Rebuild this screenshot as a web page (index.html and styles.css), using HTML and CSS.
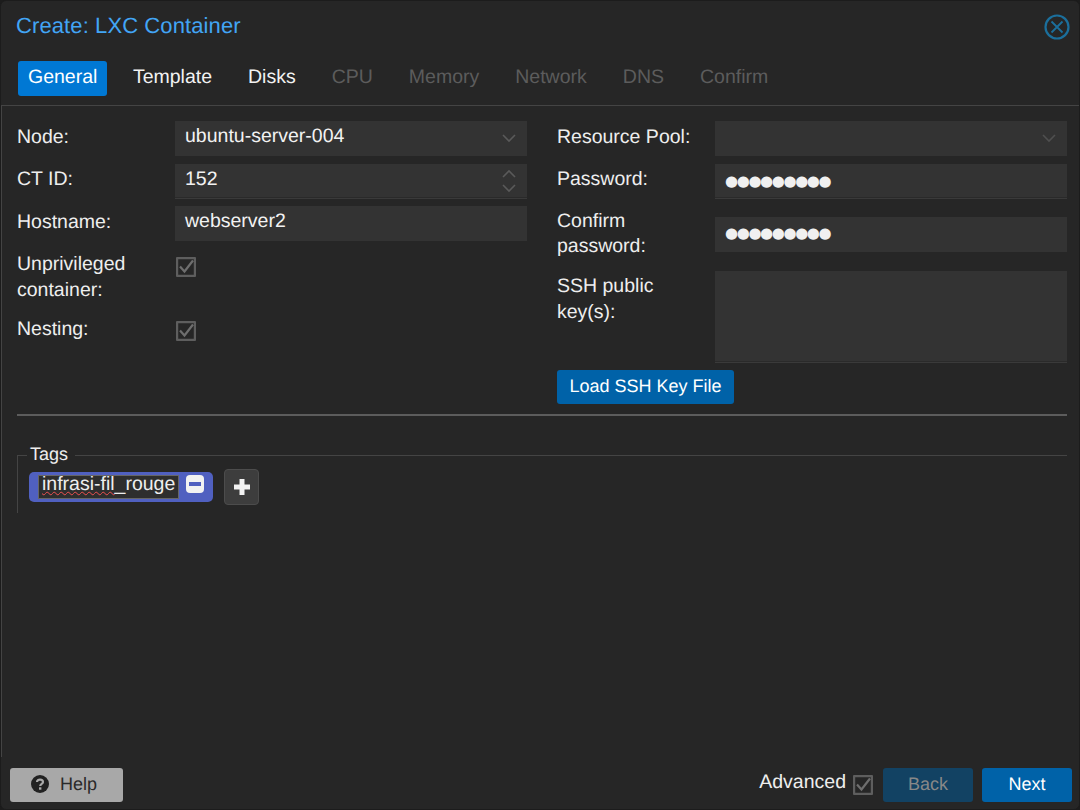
FILE: index.html
```html
<!DOCTYPE html>
<html lang="en">
<head>
<meta charset="UTF-8">
<title>Create: LXC Container</title>
<link rel="stylesheet" href="styles.css">
</head>
<body>
<div class="window">
    <div class="window-header">
        <span class="window-title">Create: LXC Container</span>
        <svg class="close-icon" width="26" height="26" viewBox="0 0 26 26">
            <circle cx="13" cy="13" r="11.5" fill="none" stroke="#1b6f9c" stroke-width="2.2"/>
            <path d="M7.5 7.5L18.5 18.5M18.5 7.5L7.5 18.5" fill="none" stroke="#1b6f9c" stroke-width="1.8"/>
        </svg>
    </div>
    <div class="tabs">
        <span class="tab active">General</span>
        <span class="tab">Template</span>
        <span class="tab">Disks</span>
        <span class="tab disabled">CPU</span>
        <span class="tab disabled">Memory</span>
        <span class="tab disabled">Network</span>
        <span class="tab disabled">DNS</span>
        <span class="tab disabled">Confirm</span>
    </div>
    <div class="panel">
        <div class="columns">
            <div class="column">
                <div class="form-row">
                    <label>Node:</label>
                    <div class="field">ubuntu-server-004
                        <svg class="chevron" width="16" height="10" viewBox="0 0 16 10"><path d="M2 2L8 8L14 2" fill="none" stroke="#5a5a5a" stroke-width="1.6"/></svg>
                    </div>
                </div>
                <div class="form-row thin-row">
                    <label>CT ID:</label>
                    <div class="field field-line">152
                        <svg class="spinner" width="16" height="26" viewBox="0 0 16 26"><path d="M2 9L8 3L14 9M2 17L8 23L14 17" fill="none" stroke="#5a5a5a" stroke-width="1.6"/></svg>
                    </div>
                </div>
                <div class="form-row">
                    <label>Hostname:</label>
                    <div class="field">webserver2</div>
                </div>
                <div class="form-row check-row">
                    <label>Unprivileged container:</label>
                    <svg class="check" width="20" height="20" viewBox="0 0 20 20"><rect x="1" y="1" width="18" height="18" rx="1" fill="none" stroke="#5e5e5e" stroke-width="2.4"/><path d="M4 9.5L8.5 14.5L17 3.5" fill="none" stroke="#6e6e6e" stroke-width="2.2"/></svg>
                </div>
                <div class="form-row check-row nesting-row">
                    <label>Nesting:</label>
                    <svg class="check" width="20" height="20" viewBox="0 0 20 20"><rect x="1" y="1" width="18" height="18" rx="1" fill="none" stroke="#5e5e5e" stroke-width="2.4"/><path d="M4 9.5L8.5 14.5L17 3.5" fill="none" stroke="#6e6e6e" stroke-width="2.2"/></svg>
                </div>
            </div>
            <div class="column">
                <div class="form-row">
                    <label class="label-short">Resource Pool:</label>
                    <div class="field">
                        <svg class="chevron" width="16" height="10" viewBox="0 0 16 10"><path d="M2 2L8 8L14 2" fill="none" stroke="#4f4f4f" stroke-width="1.6"/></svg>
                    </div>
                </div>
                <div class="form-row thin-row">
                    <label class="label-short">Password:</label>
                    <div class="field field-line dots">●●●●●●●●●</div>
                </div>
                <div class="form-row confirm-row">
                    <label class="label-short">Confirm password:</label>
                    <div class="field dots">●●●●●●●●●</div>
                </div>
                <div class="form-row ssh-row">
                    <label class="label-short">SSH public key(s):</label>
                    <div class="field field-line textarea"></div>
                </div>
                <button class="btn btn-blue load-btn">Load SSH Key File</button>
            </div>
        </div>
        <div class="divider"></div>
        <div class="tags-box">
            <div class="tags-legend"><span>Tags</span></div>
            <div class="tags-body">
                <div class="tag">
                    <span class="tag-input"><span class="misspelled">infrasi-fil</span>_rouge</span>
                    <svg class="tag-minus" width="18" height="18" viewBox="0 0 18 18"><rect width="18" height="18" rx="4" fill="#f2f2f2"/><rect x="3" y="7" width="12" height="4" fill="#5060c0"/></svg>
                </div>
                <div class="add-tag">
                    <svg width="18" height="18" viewBox="0 0 18 18"><path d="M9 1V17M1 9H17" fill="none" stroke="#f2f2f2" stroke-width="5"/></svg>
                </div>
            </div>
        </div>
    </div>
    <div class="footer">
        <button class="btn btn-help">
            <svg width="18" height="18" viewBox="0 0 18 18"><circle cx="9" cy="9" r="9" fill="#222"/><path d="M6 7C6 3.8 12 3.8 12 7C12 9 9.2 8.8 9.2 11" fill="none" stroke="#aaa" stroke-width="2.2"/><rect x="8" y="12.3" width="2.4" height="2.4" fill="#aaa"/></svg>
            Help
        </button>
        <div class="footer-right">
            <span class="advanced">Advanced</span>
            <svg class="check" width="20" height="20" viewBox="0 0 20 20"><rect x="1" y="1" width="18" height="18" rx="1" fill="none" stroke="#5e5e5e" stroke-width="2.4"/><path d="M4 9.5L8.5 14.5L17 3.5" fill="none" stroke="#6e6e6e" stroke-width="2.2"/></svg>
            <button class="btn btn-back">Back</button>
            <button class="btn btn-blue btn-next">Next</button>
        </div>
    </div>
</div>
</body>
</html>
```

FILE: styles.css
```css
html, body {
    margin: 0;
    height: 100%;
    background-color: #1c1c1c;
}
body {
    font-family: "Liberation Sans", Arial, sans-serif;
    font-size: 19.5px;
    color: #f2f2f2;
    text-rendering: geometricPrecision;
}
.window {
    box-sizing: border-box;
    width: 1080px;
    height: 810px;
    padding: 1px 0 0 0;
    display: flex;
    flex-direction: column;
    background-color: #262626;
    border-radius: 6px;
    border: 1px solid #1c1c1c;
}
.window-header {
    height: 48px;
    display: flex;
    align-items: center;
    justify-content: space-between;
    padding: 0 9px 0 15px;
    flex-shrink: 0;
}
.window-title {
    color: #42a5f5;
    font-size: 22px;
    margin-top: -1px;
    letter-spacing: 0.1px;
}
.close-icon {
    margin-top: 1px;
}
.tabs {
    height: 56px;
    display: flex;
    gap: 16px;
    padding: 11px 0 0 17px;
    box-sizing: border-box;
    border-bottom: 1px solid #444;
    flex-shrink: 0;
}
.tab {
    height: 35px;
    line-height: 33px;
    padding: 0 10px;
    border-radius: 3px;
}
.tab.active {
    background-color: #0078d4;
    color: #fff;
    margin-right: -0.5px;
}
.tab.disabled {
    color: #5c5c5c;
}
.panel {
    flex: 1;
    border-left: 1px solid #444;
    padding: 15px 12px 0 15px;
}
.columns {
    display: flex;
    gap: 30px;
}
.column {
    width: 510px;
}
.form-row {
    display: flex;
    margin-bottom: 8px;
}
.form-row label {
    width: 158px;
    flex-shrink: 0;
    line-height: 26px;
    padding-top: 3px;
    color: #eee;
}
.form-row .label-short {
    width: 158px;
    padding-right: 20px;
    box-sizing: border-box;
}
.thin-row label {
    padding-top: 2px;
}
.field {
    flex: 1;
    position: relative;
    height: 35px;
    line-height: 30px;
    padding-left: 10px;
    background-color: #333;
    color: #f2f2f2;
    box-sizing: border-box;
}
.field-line {
    height: 34px;
    border-bottom: 1px solid #2a2a2a;
    box-shadow: 0 1px 0 #3a3a3a;
}
.chevron {
    position: absolute;
    right: 10px;
    top: 12px;
}
.spinner {
    position: absolute;
    right: 10px;
    top: 4px;
}
.dots {
    font-size: 15px;
    letter-spacing: -1.4px;
    line-height: 34px;
    font-family: "DejaVu Sans", sans-serif;
    color: #f0f0f0;
}
.check-row {
    margin-top: 15px;
    margin-bottom: 0;
}
.check-row label {
    margin-top: -8px;
}
.check-row .check {
    margin-top: 1px;
    margin-left: 1px;
}
.nesting-row {
    margin-top: 17px;
    height: 35px;
}
.nesting-row label {
    margin-top: -7px;
}
.confirm-row {
    margin-top: 19px;
    margin-bottom: 19px;
    height: 35px;
}
.confirm-row label {
    padding-top: 0;
    margin-top: -8px;
    line-height: 25px;
}
.confirm-row .dots {
    line-height: 32px;
}
.ssh-row label {
    padding-top: 2px;
}
.textarea {
    height: 91px;
}
.btn {
    font-family: "Liberation Sans", Arial, sans-serif;
    font-size: 18px;
    height: 34px;
    border: none;
    border-radius: 3px;
    padding: 0 0 2px 0;
    text-rendering: geometricPrecision;
}
.btn-blue {
    background-color: #0062a8;
    color: #fff;
}
.load-btn {
    width: 177px;
    display: block;
}
.divider {
    height: 2px;
    background-color: #5c5c5c;
    margin-top: 10px;
}
.tags-box {
    margin-top: 39px;
    height: 58px;
    border-left: 1px solid #444;
}
.tags-legend {
    height: 1px;
    display: flex;
    align-items: center;
    position: relative;
}
.tags-legend::after {
    content: "";
    flex: 1;
    height: 1px;
    background-color: #444;
}
.tags-legend span {
    padding: 0 7px 0 7px;
    margin-left: 5px;
    margin-top: -4px;
    font-size: 18px;
    color: #eee;
    line-height: 22px;
}
.tags-legend::before {
    content: "";
    width: 9px;
    height: 1px;
    background-color: #444;
    position: absolute;
    left: 0;
    top: 0;
}
.tags-body {
    display: flex;
    align-items: center;
    gap: 11px;
    padding: 13px 0 0 11px;
}
.tag {
    width: 184px;
    height: 30px;
    box-sizing: border-box;
    background-color: #5060c0;
    border-radius: 5px;
    display: flex;
    align-items: center;
    gap: 7px;
    padding-left: 9px;
}
.tag-input {
    width: 141px;
    height: 24px;
    box-sizing: border-box;
    background-color: #2e2e2e;
    border: 1px solid #666;
    line-height: 17px;
    padding-left: 3px;
    color: #eee;
    white-space: nowrap;
    overflow: hidden;
    font-size: 19.5px;
}
.tag-minus {
    margin-top: -6px;
}
.misspelled {
    text-decoration: underline wavy #f05050 1px;
    text-underline-offset: 1px;
}
.add-tag {
    width: 35px;
    height: 36px;
    box-sizing: border-box;
    background-color: #3d3d3d;
    border: 1px solid #4c4c4c;
    border-radius: 4px;
    display: flex;
    align-items: center;
    justify-content: center;
}
.footer {
    height: 52px;
    display: flex;
    justify-content: space-between;
    padding: 11px 7px 0 9px;
    box-sizing: border-box;
    flex-shrink: 0;
}
.btn-help {
    width: 113px;
    background-color: #a8a8a8;
    color: #2a2a2a;
    display: flex;
    align-items: center;
    gap: 11px;
    padding-left: 21px;
    box-sizing: border-box;
}
.footer-right {
    display: flex;
    align-items: flex-start;
}
.advanced {
    line-height: 28px;
    color: #eee;
    margin-right: 7px;
}
.footer-right .check {
    margin-top: 7px;
    margin-right: 10px;
}
.btn-back {
    width: 90px;
    margin-right: 9px;
    background-color: #124263;
    color: #888;
}
.btn-next {
    width: 90px;
}
```
